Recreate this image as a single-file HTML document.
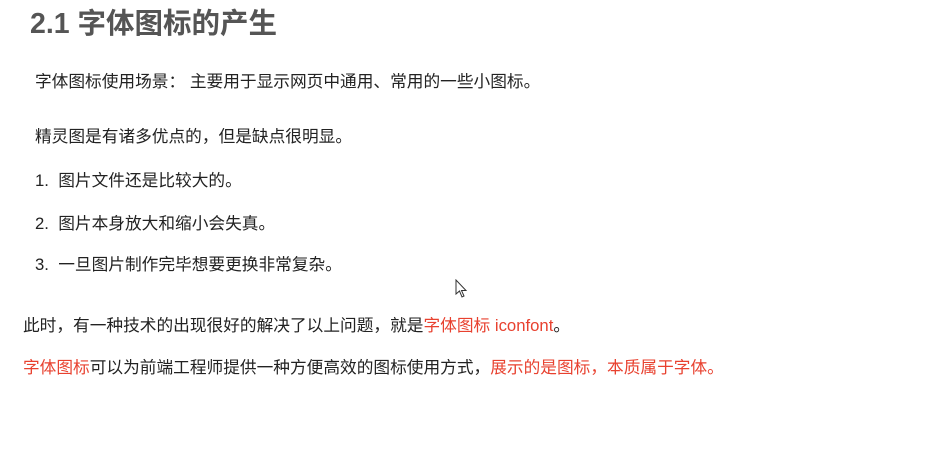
<!DOCTYPE html>
<html><head><meta charset="utf-8"><style>
body{margin:0;width:938px;height:458px;background:#fff;position:relative;overflow:hidden;font-family:"Liberation Sans","Noto Sans CJK SC",sans-serif;}
.t{position:absolute;left:30px;top:1px;font-size:28.5px;font-weight:bold;color:#555;white-space:nowrap;}
.l{position:absolute;font-size:16.7px;color:#222;white-space:nowrap;line-height:20px;}
.r{color:#e8412f;}
</style></head><body>
<div class="t">2.1 字体图标的产生</div>
<div class="l" style="left:35px;top:72px">字体图标使用场景： 主要用于显示网页中通用、常用的一些小图标。</div>
<div class="l" style="left:35px;top:127px">精灵图是有诸多优点的，但是缺点很明显。</div>
<div class="l" style="left:35px;top:171px">1.&nbsp;&nbsp;图片文件还是比较大的。</div>
<div class="l" style="left:35px;top:214px">2.&nbsp;&nbsp;图片本身放大和缩小会失真。</div>
<div class="l" style="left:35px;top:255px">3.&nbsp;&nbsp;一旦图片制作完毕想要更换非常复杂。</div>
<div class="l" style="left:23px;top:316px">此时，有一种技术的出现很好的解决了以上问题，就是<span class="r">字体图标 iconfont</span>。</div>
<div class="l" style="left:23px;top:358px"><span class="r">字体图标</span>可以为前端工程师提供一种方便高效的图标使用方式，<span class="r">展示的是图标，本质属于字体。</span></div>
<svg style="position:absolute;left:455px;top:279px" width="14" height="20" viewBox="0 0 14 20"><path d="M1 1 L1 15 L4.5 12 L7 18 L9 17 L6.5 11.5 L11 11.5 Z" fill="#fff" stroke="#333" stroke-width="1"/></svg>
</body></html>
